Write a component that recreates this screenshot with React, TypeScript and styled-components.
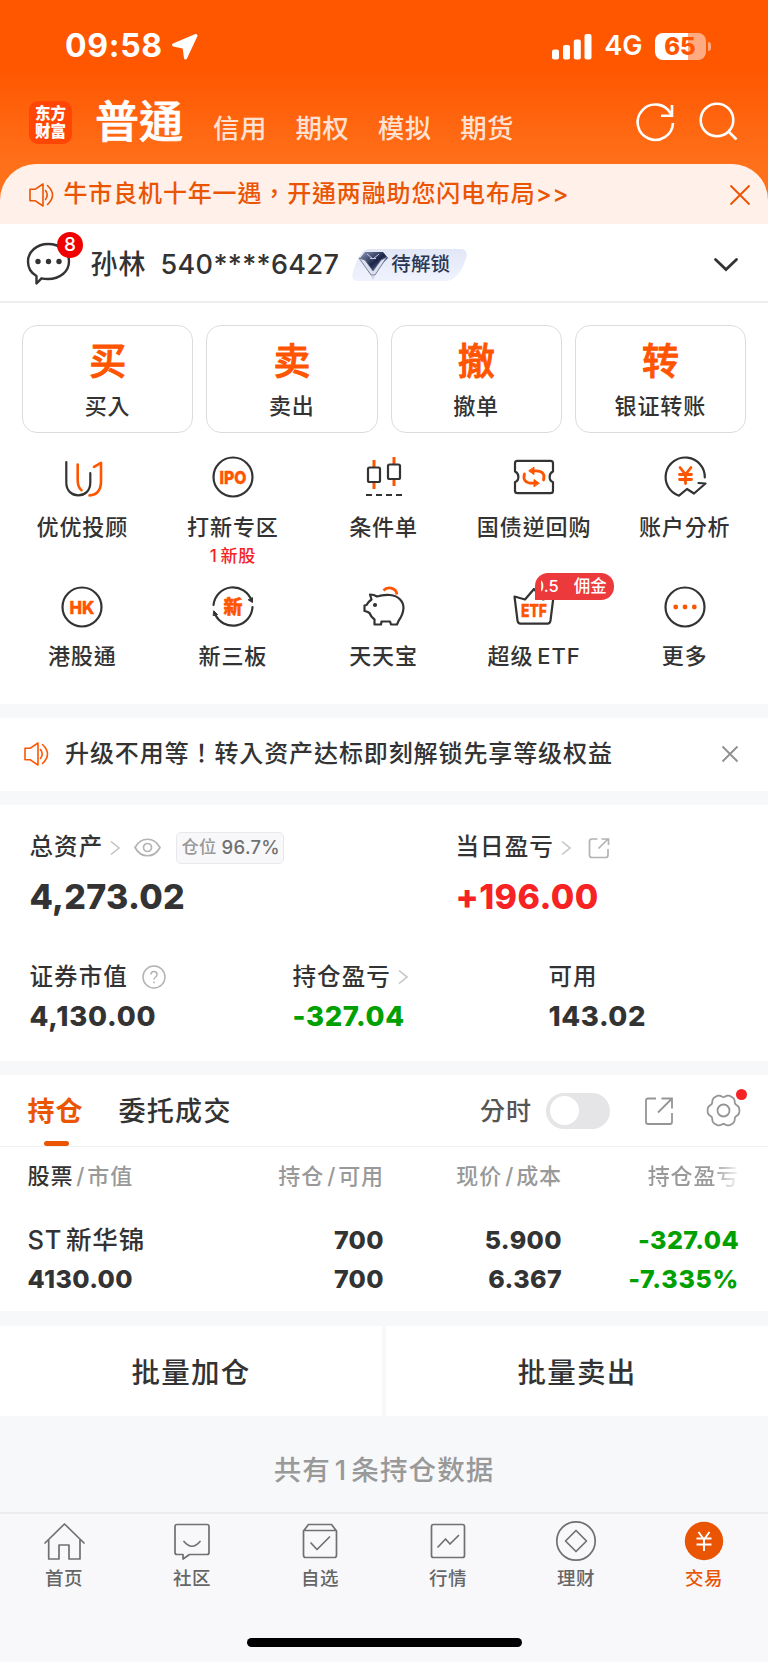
import React from "react";
import styled, { createGlobalStyle } from "styled-components";

const INK = "#333333";
const ORANGE = "#ff5500";
const DEEP = "#ea5504";
const GREEN = "#00a000";
const RED = "#f62223";

const Global = createGlobalStyle`
  * { box-sizing: border-box; }
  body {
    margin: 0;
    background: #f7f8fa;
    color: ${INK};
    font-family: Inter, "Noto Sans CJK TC", "Noto Sans CJK SC", sans-serif;
    font-weight: 500;
  }
  svg { display: block; flex: none; overflow: visible; }
`;

const Page = styled.div`
  width: 768px;
  height: 1662px;
  overflow: hidden;
  display: flex;
  flex-direction: column;
`;

type LabelProps = { $s: number; $p?: number; $c?: string; $w?: number };
/* $s is the font size, $p the extra tracking between glyphs */
const Label = styled.span<LabelProps>`
  font-size: ${(p) => p.$s}px;
  letter-spacing: ${(p) => p.$p ?? 0}px;
  color: ${(p) => p.$c ?? "inherit"};
  font-weight: ${(p) => p.$w ?? 500};
  line-height: 1.2;
  white-space: nowrap;
`;
/* Latin run or digit inside Chinese text, with thin gaps round it */
const Latin = styled.span<{ $l?: number; $r?: number }>`
  margin: 0 ${(p) => p.$r ?? 0}px 0 ${(p) => p.$l ?? 0}px;
`;

/* ---------- header ---------- */
const Top = styled.header`
  background: linear-gradient(#ff5600 0, #ff5600 66px, #ff701a 164px);
  flex: none;
`;
const StatusBar = styled.div`
  height: 92px;
  padding: 1px 62.5px 0 65px;
  display: flex;
  align-items: center;
  color: #fff;
`;
const Spacer = styled.div`
  flex: 1;
`;
const Network = styled(Label)`
  margin-left: 12px;
`;
const Battery = styled.div`
  position: relative;
  margin-left: 12px;
  width: 51px;
  height: 27px;
  border-radius: 8px;
  background: linear-gradient(90deg, #fff 33px, #ffab82 33px);
  color: ${ORANGE};
  font-size: 24px;
  font-weight: 800;
  line-height: 27px;
  text-align: center;
  &::after {
    content: "";
    position: absolute;
    left: 53px;
    top: 9px;
    width: 3px;
    height: 9px;
    border-radius: 0 4px 4px 0;
    background: #ffab82;
  }
`;
const TitleBar = styled.div`
  height: 72px;
  padding: 0 29px;
  display: flex;
  align-items: flex-start;
`;
const Logo = styled.div`
  width: 43px;
  height: 43px;
  margin: 9px 23px 0 0;
  border-radius: 9px;
  background: #ff4605;
  color: #fff;
  font: 900 15.5px/17.5px "Noto Sans CJK SC", sans-serif;
  text-align: center;
  padding-top: 3px;
`;
const TitleTabs = styled.nav`
  display: flex;
  gap: 28.6px;
  color: rgba(255, 255, 255, 0.82);
  padding-top: 21px;
`;
const MainTitle = styled.h1`
  margin: 3.5px 30px 0 0;
  font-size: 44px;
  line-height: 52px;
  font-weight: 500;
  -webkit-text-stroke: 0.7px #fff;
  color: #fff;
`;
const TitleIcons = styled.div`
  margin-left: auto;
  padding-top: 8px;
  display: flex;
`;
const Banner = styled.div`
  height: 60px;
  padding: 1px 18px 0 29px;
  border-radius: 36px 36px 0 0;
  background: #fff0e9;
  color: ${DEEP};
  display: flex;
  align-items: center;
  gap: 9.5px;
`;

/* ---------- account ---------- */
const UserRow = styled.section`
  height: 79px;
  flex: none;
  padding: 5px 30px 0 26px;
  background: #fff;
  border-bottom: 2px solid #eeeeef;
  display: flex;
  align-items: center;
`;
const ChatBox = styled.div`
  position: relative;
  width: 64.5px;
`;
const Count = styled.span`
  position: absolute;
  left: 31px;
  top: -10.5px;
  width: 26px;
  height: 26px;
  border-radius: 13px;
  background: #f00000;
  color: #fff;
  font-size: 19px;
  line-height: 26px;
  text-align: center;
`;
const AccountNo = styled(Label)`
  margin-left: 14px;
`;
const Vip = styled.div`
  position: relative;
  width: 116px;
  height: 32px;
  margin-left: 13px;
  padding-left: 39px;
  display: flex;
  align-items: center;
  svg {
    position: absolute;
    left: 0;
    top: 0;
  }
  span {
    position: relative;
  }
`;

/* ---------- trading actions ---------- */
const Actions = styled.section`
  height: 401px;
  flex: none;
  background: #fff;
  padding-top: 22px;
`;
const Cards = styled.div`
  display: grid;
  grid-template-columns: repeat(4, 1fr);
  gap: 13px;
  padding: 0 22px;
`;
const Card = styled.div`
  height: 108px;
  border: 1.5px solid #dcdcdc;
  border-radius: 15px;
  display: flex;
  flex-direction: column;
  align-items: center;
  padding-top: 14px;
  gap: 9px;
`;
const CardMark = styled(Label)`
  -webkit-text-stroke: 0.9px ${ORANGE};
`;
const Grid = styled.div`
  display: grid;
  grid-template-columns: repeat(5, 1fr);
  padding: 21.3px 8px 0 7px;
`;
const Cell = styled.div`
  position: relative;
  height: 129.3px;
  display: flex;
  flex-direction: column;
  align-items: center;
`;
const CellLabel = styled(Label)`
  margin-top: 13.3px;
`;
const Hint = styled(Label)`
  margin-top: 6.5px;
`;
const Fee = styled.div`
  position: absolute;
  left: 76px;
  top: -10.5px;
  width: 79px;
  height: 27px;
  padding-left: 6px;
  border-radius: 13px 13px 13px 0;
  background: #ec393c;
  color: #fff;
  font-size: 16.5px;
  line-height: 27px;
`;
const FeeClip = styled.div`
  overflow: hidden;
  display: flex;
  justify-content: flex-end;
  gap: 15px;
  width: 66px;
  white-space: nowrap;
`;

/* ---------- notice ---------- */
const Notice = styled.section`
  flex: none;
  height: 72.5px;
  margin: 14px 0;
  padding: 0 30px 0 23.5px;
  background: #fff;
  display: flex;
  align-items: center;
  gap: 16.5px;
`;

/* ---------- assets ---------- */
const Assets = styled.section`
  flex: none;
  height: 256.5px;
  background: #fff;
  padding: 24px 0 0 29.5px;
`;
const AssetRow = styled.div<{ $cols: string; $gap: number }>`
  display: grid;
  grid-template-columns: ${(p) => p.$cols};
  margin-bottom: ${(p) => p.$gap}px;
`;
const Head = styled.div`
  display: flex;
  align-items: center;
  height: 38px;
`;
const Ratio = styled.div`
  height: 32px;
  width: 108px;
  margin-left: 15px;
  padding-left: 2px;
  border: 1.5px solid #e8e8ec;
  border-radius: 5px;
  background: #f8f8fb;
  display: flex;
  align-items: center;
  justify-content: center;
  gap: 5px;
`;
const Figure = styled.div<{ $s: number; $c?: string; $p?: number }>`
  font-size: ${(p) => p.$s}px;
  font-weight: 800;
  letter-spacing: ${(p) => p.$p ?? 0.6}px;
  line-height: 40px;
  color: ${(p) => p.$c ?? INK};
`;
const Total = styled(Figure)`
  line-height: 44px;
  padding-top: 8px;
`;

/* ---------- positions ---------- */
const Positions = styled.section`
  flex: none;
  height: 236px;
  margin-top: 14px;
  background: #fff;
`;
const TabBar = styled.div`
  height: 72px;
  border-bottom: 1.5px solid #f0f1f3;
  padding: 0 28px 0 27.5px;
  display: flex;
  align-items: center;
`;
const ActiveTab = styled.div`
  position: relative;
  margin-right: 35px;
  padding-top: 3px;
  color: ${DEEP};
  &::after {
    content: "";
    position: absolute;
    left: 16px;
    bottom: -17.5px;
    width: 25px;
    height: 5px;
    border-radius: 2.5px;
    background: ${DEEP};
  }
`;
const PlainTab = styled(Label)`
  padding-top: 3px;
`;
const Toggle = styled.div`
  width: 64px;
  height: 36px;
  margin: 0 35px 0 14px;
  padding: 3.5px;
  border-radius: 18px;
  background: #e5e5e8;
  &::before {
    content: "";
    display: block;
    width: 29px;
    height: 29px;
    border-radius: 50%;
    background: #fff;
  }
`;
const GearBox = styled.div`
  position: relative;
  margin-left: 34px;
  &::after {
    content: "";
    position: absolute;
    right: -7px;
    top: -5px;
    width: 11px;
    height: 11px;
    border-radius: 50%;
    background: #f62223;
  }
`;
const Table = styled.div`
  display: grid;
  grid-template-columns: 201px 155.5px 178px 177px;
  grid-template-rows: 58px 70px 7px;
  padding-left: 27.5px;
  align-items: center;
`;
const Right = styled.div`
  text-align: right;
  white-space: nowrap;
`;
const FadeRight = styled(Right)`
  background: linear-gradient(90deg, #999 0, #999 150px, rgba(153, 153, 153, 0.1) 176px);
  -webkit-background-clip: text;
  background-clip: text;
  color: transparent;
`;
const Batch = styled.section`
  flex: none;
  margin-top: 14.5px;
  display: grid;
  grid-template-columns: 382px 382px;
  gap: 4px;
`;
const BatchButton = styled.div`
  height: 90.5px;
  background: #fff;
  display: flex;
  align-items: center;
  justify-content: center;
  padding-top: 4px;
`;
const Summary = styled.div`
  flex: none;
  height: 95.5px;
  padding-top: 13px;
  display: flex;
  align-items: center;
  justify-content: center;
`;
const BottomBar = styled.footer`
  flex: 1;
  border-top: 2px solid #ececee;
  background: #f8f8fb;
`;
const BottomTabs = styled.nav`
  display: grid;
  grid-template-columns: repeat(6, 1fr);
  padding-top: 6px;
`;
const BottomTab = styled.div`
  display: flex;
  flex-direction: column;
  align-items: center;
  gap: 5px;
`;
const HomeBar = styled.div`
  width: 275px;
  height: 9px;
  margin: 49px auto 0;
  border-radius: 5px;
  background: #000;
`;

/* ---------- icons ---------- */
const Speaker = ({ c }: { c: string }) => (
  <svg width="25" height="26" viewBox="0 0 25 26" fill="none" stroke={c} strokeWidth="1.6" strokeLinejoin="round" strokeLinecap="round">
    <path d="M1 7.3H6L14 2V24L6 18.7H1Z M16.5 8.5Q20 13 16.5 17.5 M18.5 3.5Q28.5 13 18.5 22.5" />
  </svg>
);
const Cross = ({ size, c, w }: { size: number; c: string; w: number }) => (
  <svg width={size} height={size} viewBox={`0 0 ${size} ${size}`} stroke={c} strokeWidth={w}>
    <path d={`M.5 .5L${size - 0.5} ${size - 0.5}M${size - 0.5} .5L.5 ${size - 0.5}`} />
  </svg>
);
const ArrowSvg = styled.svg<{ $m: string }>`
  margin: ${(p) => p.$m};
`;
const Arrow = ({ m }: { m: string }) => (
  <ArrowSvg $m={m} width="10" height="16" viewBox="0 0 10 16" fill="none" stroke="#c4c4c4" strokeWidth="1.6">
    <path d="M1 1.5L9 8L1 14.5" />
  </ArrowSvg>
);
const LocationSvg = styled.svg`
  margin-left: 8px;
`;
const HelpSvg = styled.svg`
  margin-left: 14px;
`;
const Fn = ({ children }: { children: React.ReactNode }) => (
  <svg width="46" height="46" viewBox="-23 -23 46 46" fill="none" stroke={INK} strokeWidth="2.2" strokeLinecap="round" strokeLinejoin="round">
    {children}
  </svg>
);
const Word = ({ t, y = 6.6, len, s = 18 }: { t: string; y?: number; len: number; s?: number }) => (
  <text x={-len / 2} y={y} textLength={len} lengthAdjust="spacingAndGlyphs" fontSize={s} fontWeight="800" fill={ORANGE} stroke={ORANGE} strokeWidth="0.4">
    {t}
  </text>
);

/* six soft teeth, one at every 60 degrees */
const gearOutline =
  "M" +
  Array.from({ length: 72 }, (_, i) => {
    const a = (i * Math.PI) / 36;
    const r = 15 + 1.2 * Math.cos(6 * a) - 0.35 * Math.cos(12 * a);
    return `${(r * Math.cos(a)).toFixed(2)} ${(r * Math.sin(a)).toFixed(2)}`;
  }).join("L") +
  "Z";

const functions: { name: string; latin?: string; icon: React.ReactNode; hint?: boolean; fee?: boolean }[] = [
  {
    name: "优优投顾",
    icon: (
      <>
        <path d="M-15.7-15V5.5C-15.7 14-10 18.3-3.7 18.3S8.3 14 8.3 5.5V-4" />
        <g stroke={ORANGE} strokeWidth="2.6">
          <path d="M-4.3-12.5V3C-4.3 8-3.3 11-.5 13.2" />
          <path d="M12-10.2L19-14.2V4C19 13 15 18 7.5 18.4" />
        </g>
      </>
    ),
  },
  {
    name: "打新专区",
    hint: true,
    icon: (
      <>
        <circle r="19.5" />
        <Word t="IPO" len={27} />
      </>
    ),
  },
  {
    name: "条件单",
    icon: (
      <>
        <path stroke={ORANGE} strokeWidth="3" strokeLinecap="butt" d="M-9-17V-10M-9 5V12M11-20V-12M11 2V9" />
        <rect x="-15" y="-9.5" width="12" height="14.5" rx="1.5" />
        <rect x="5" y="-12.5" width="12" height="14.5" rx="1.5" />
        <path strokeLinecap="butt" d="M-17 18H-11M-7 18H-1M3 18H9M13 18H19" />
      </>
    ),
  },
  {
    name: "国债逆回购",
    icon: (
      <>
        <path d="M-16.5-16.2H16.5Q19-16.2 19-13.7V-5.5C14.5-3.5 14.5 3.5 19 5V13.7Q19 16.2 16.5 16.2H-16.5Q-19 16.2-19 13.7V5C-14.5 3.5-14.5-3.5-19-5.5V-13.7Q-19-16.2-16.5-16.2Z" />
        <g stroke={ORANGE} strokeWidth="2.8">
          <path d="M-9.5-3C-11.5 3-8 6.2-2 6.2H0M9.5 3C11.5-3 8-6.2 2-6.2H0" />
          <path fill={ORANGE} strokeWidth="1" d="M0-9.5V-2.5L-5-6ZM0 9.5V2.5L5 6Z" />
        </g>
      </>
    ),
  },
  {
    name: "账户分析",
    icon: (
      <>
        <path d="M19.8 .5A19.6 19.6 0 1 0-6 18.7L2 12L9 16.5L20.5 6.5L13.5 6" />
        <path stroke={ORANGE} strokeWidth="2.8" d="M-5-9.5L.5-2.5L6-9.5M.5-2.5V6.5M-5.5-2.5H6.5M-5.5 2.5H6.5" />
      </>
    ),
  },
  {
    name: "港股通",
    icon: (
      <>
        <circle r="19.5" />
        <Word t="HK" len={25} />
      </>
    ),
  },
  {
    name: "新三板",
    icon: (
      <>
        <path d="M-19.5-2A19.6 19.6 0 0 1 18.5-6.5M19.5 0A19.6 19.6 0 0 1-18 7" />
        <path fill={INK} strokeWidth="1" d="M19.5-9V-4.5L15.5-7ZM-19 4L-15.5 7.5L-19.5 8.5Z" />
        <Word t="新" len={19} s={19} y={7} />
      </>
    ),
  },
  {
    name: "天天宝",
    icon: (
      <>
        <path d="M-13-12.5Q-9-12.5-6-10.5Q0-12.5 7-12C16-11 20.5-5.5 20.5 1Q20 8 15.5 14L14 17.5H8L7 14.5H-1.5L-2 17.5H-8.5V12.5Q-12 10-13.5 6Q-15.5 4.5-18.5 4V-1.5L-16.5-2Q-15-5-11.5-7.5Z" />
        <path stroke={ORANGE} strokeWidth="2.8" strokeLinecap="butt" d="M.5-16.5C4-20.5 13-20 14-12.5" />
        <circle cx="-8" cy="-2" r="2.1" fill={INK} stroke="none" />
      </>
    ),
  },
  {
    name: "超级",
    latin: "ETF",
    fee: true,
    icon: (
      <>
        <path d="M-19.5-10.5L-9-7.5L0-18L9-7.5L19.5-10.5L16.5 13.5Q16 16.6 13.5 16.6H-13.5Q-16 16.6-16.5 13.5Z" />
        <Word t="ETF" len={26} y={10.3} />
      </>
    ),
  },
  {
    name: "更多",
    icon: (
      <>
        <circle r="19.5" />
        <g fill={ORANGE} stroke="none">
          <circle cx="-9.3" r="2.4" />
          <circle r="2.4" />
          <circle cx="9.3" r="2.4" />
        </g>
      </>
    ),
  },
];

const tabs: { name: string; icon: React.ReactNode; on?: boolean }[] = [
  { name: "首页", icon: <path d="M-19 2L.5-17L20 2M-15.3-1.5V18H-5V4H5V18H16V-1.5" /> },
  { name: "社区", icon: <path d="M-15-16.5H15Q17-16.5 17-14.5V11.5Q17 13.5 15 13.5H-2.5L-9 18V13.5H-15Q-17 13.5-17 11.5V-14.5Q-17-16.5-15-16.5ZM-8 .5Q0 10 8 .5" /> },
  { name: "自选", icon: <path d="M-11.5-16.5H11.5L16.5-10V14Q16.5 16.5 14.5 16.5H-14.5Q-16.5 16.5-16.5 14V-10ZM-16-10.5H16M-9 2L-3 8.5L9.5-4" /> },
  { name: "行情", icon: <path d="M-14.5-16.5H14.5Q16.5-16.5 16.5-14.5V14.5Q16.5 16.5 14.5 16.5H-14.5Q-16.5 16.5-16.5 14.5V-14.5Q-16.5-16.5-14.5-16.5ZM-10 6L-2.5-2L2 3L10.5-5.5" /> },
  { name: "理财", icon: <><circle r="19.2" /><path d="M0-10.5L10.5 0L0 10.5L-10.5 0Z" /></> },
  {
    name: "交易",
    on: true,
    icon: (
      <>
        <circle r="19.2" fill={DEEP} stroke="none" />
        <path stroke="#fff" strokeWidth="2" strokeLinecap="butt" d="M-5.5-9L0-1.5L5.5-9M0-1.5V10M-7.5-2.5H7.5M-7.5 3.5H7.5" />
      </>
    ),
  },
];

const cards = [
  ["买", "买入"],
  ["卖", "卖出"],
  ["撤", "撤单"],
  ["转", "银证转账"],
];

const Slash = () => <Latin $l={3} $r={2}>/</Latin>;
const Pair = ({ a, b }: { a: string; b: string }) => (
  <Right>
    <Label $s={22} $p={0.9} $c="#999">{a}<Slash />{b}</Label>
  </Right>
);
const Num = ({ v, c, p = 0.4 }: { v: string; c?: string; p?: number }) => (
  <Right><Label $s={25} $w={800} $p={p} $c={c}>{v}</Label></Right>
);

export default function App() {
  return (
    <Page>
      <Global />
      <Top>
        <StatusBar>
          <Label $s={32} $w={700} $p={0.7}>09:58</Label>
          <LocationSvg width="28" height="28" viewBox="0 0 28 28">
            <path d="M25 2.5L2.5 12L13 14.2L14.5 25Z" fill="#fff" stroke="#fff" strokeWidth="3" strokeLinejoin="round" />
          </LocationSvg>
          <Spacer />
          <svg width="40" height="26" viewBox="0 0 40 26" fill="#fff">
            <rect y="15.5" width="7" height="10" rx="2" />
            <rect x="11" y="11" width="7" height="14.5" rx="2" />
            <rect x="21.8" y="5.5" width="7" height="20" rx="2" />
            <rect x="32.5" y="0" width="7" height="25.5" rx="2" />
          </svg>
          <Network $s={27} $w={600}>4G</Network>
          <Battery>65</Battery>
        </StatusBar>
        <TitleBar>
          <Logo>东方<br />财富</Logo>
          <MainTitle>普通</MainTitle>
          <TitleTabs>
            {["信用", "期权", "模拟", "期货"].map((t) => (
              <Label key={t} $s={26.5} $p={0.4}>{t}</Label>
            ))}
          </TitleTabs>
          <TitleIcons>
            <svg width="105" height="44" viewBox="0 0 105 44" fill="none" stroke="#fff" strokeWidth="2.6">
              <path d="M37 14A17.7 17.7 0 1 0 39 23M38 5V15.7H27" />
              <circle cx="83" cy="20" r="16.3" />
              <path d="M94 31L102.5 39.5" />
            </svg>
          </TitleIcons>
        </TitleBar>
        <Banner>
          <Speaker c={DEEP} />
          <Label $s={24} $p={0.85}>牛市良机十年一遇，开通两融助您闪电布局&gt;&gt;</Label>
          <Spacer />
          <Cross size={20} c={DEEP} w={1.9} />
        </Banner>
      </Top>

      <UserRow>
        <ChatBox>
          <svg width="46" height="46" viewBox="0 0 46 46" fill="none" stroke={INK} strokeWidth="2.4" strokeLinejoin="round">
            <path d="M22 2C34 2 43 9.5 43 19.5S34 37 22 37Q18 37 15.5 36.3L10.5 41.5V34C5 31 2 26 2 19.5C2 9.5 11 2 22 2Z" />
            <g fill={INK} stroke="none">
              <circle cx="12" cy="19.5" r="2.7" />
              <circle cx="22.5" cy="19.5" r="2.7" />
              <circle cx="33" cy="19.5" r="2.7" />
            </g>
          </svg>
          <Count>8</Count>
        </ChatBox>
        <Label $s={27} $p={1}>孙林</Label>
        <AccountNo $s={27} $p={0.35}>540****6427</AccountNo>
        <Vip>
          <svg width="116" height="32" viewBox="0 0 116 32">
            <defs>
              <linearGradient id="pill" x1="0" y1="0" x2="0" y2="1">
                <stop offset="0" stopColor="#e2e7f6" />
                <stop offset="1" stopColor="#f0f3fe" />
              </linearGradient>
              <linearGradient id="gem" x1="0" y1="0" x2="1" y2="1">
                <stop offset="0" stopColor="#8f9ac0" />
                <stop offset=".5" stopColor="#1b2547" />
                <stop offset="1" stopColor="#8c98bb" />
              </linearGradient>
            </defs>
            <path d="M17 0H108Q116 0 114.5 8Q107 32 93 32H6Q-1 32 .5 25Q7 0 17 0Z" fill="url(#pill)" />
            <path d="M13 3H31L36 9L21 24L8 9Z" fill="url(#gem)" />
            <path d="M7 9L13 11L21 22L29 11L35 8L23 26H19Z" fill="#dcdfec" stroke="#59648a" strokeWidth=".8" />
            <path d="M19 27H23L21 31Z" fill="#cfd4e6" />
            <path d="M15 5L21 10L27 5M18 9.5L24 9.5" stroke="#c3cae2" fill="none" />
          </svg>
          <Label $s={19.5} $p={0.2} $c="#2b3654">待解锁</Label>
        </Vip>
        <Spacer />
        <svg width="24" height="14" viewBox="0 0 24 14" fill="none" stroke={INK} strokeWidth="2.8" strokeLinecap="round">
          <path d="M1.5 1.5L12 11.5L22.5 1.5" />
        </svg>
      </UserRow>

      <Actions>
        <Cards>
          {cards.map(([big, small]) => (
            <Card key={big}>
              <CardMark $s={37} $c={ORANGE}>{big}</CardMark>
              <Label $s={22} $p={0.9}>{small}</Label>
            </Card>
          ))}
        </Cards>
        <Grid>
          {functions.map((f) => (
            <Cell key={f.name}>
              <Fn>{f.icon}</Fn>
              <CellLabel $s={22} $p={0.9}>{f.name}{f.latin && <Latin $l={4}>{f.latin}</Latin>}</CellLabel>
              {f.hint && <Hint $s={17} $p={0.8} $c={RED}><Latin $r={3}>1</Latin>新股</Hint>}
              {f.fee && (
                <Fee>
                  <FeeClip><span>0.5</span><span>佣金</span></FeeClip>
                </Fee>
              )}
            </Cell>
          ))}
        </Grid>
      </Actions>

      <Notice>
        <Speaker c={ORANGE} />
        <Label $s={24} $p={0.9}>升级不用等！转入资产达标即刻解锁先享等级权益</Label>
        <Spacer />
        <Cross size={16} c="#8f8f8f" w={1.8} />
      </Notice>

      <Assets>
        <AssetRow $cols="426px 1fr" $gap={39.5}>
          <div>
            <Head>
              <Label $s={23.5} $p={1.1}>总资产</Label>
              <Arrow m="0 14px 0 6.5px" />
              <svg width="27" height="19" viewBox="0 0 27 19" fill="none" stroke="#b3b3b3" strokeWidth="1.7">
                <path d="M1 9.5C7-1.5 20-1.5 26 9.5C20 20.5 7 20.5 1 9.5Z" />
                <circle cx="13.5" cy="9.5" r="4" />
              </svg>
              <Ratio>
                <Label $s={17.3} $p={0.2} $c="#999">仓位</Label>
                <Label $s={18.5} $p={0.3} $c="#707070">96.7%</Label>
              </Ratio>
            </Head>
            <Total $s={34} $p={0.3}>4,273.02</Total>
          </div>
          <div>
            <Head>
              <Label $s={23.5} $p={1.1}>当日盈亏</Label>
              <Arrow m="0 17px 0 7px" />
              <svg width="22" height="22" viewBox="0 0 22 22" fill="none" stroke="#b3b3b3" strokeWidth="1.7">
                <path d="M9.5 2H4Q1.5 2 1.5 4.5V18Q1.5 20.5 4 20.5H17.5Q20 20.5 20 18V12M10.5 11.5L20 2M13.5 2H20.5V8" />
              </svg>
            </Head>
            <Total $s={34} $c={RED} $p={0.4}>+196.00</Total>
          </div>
        </AssetRow>
        <AssetRow $cols="263px 256px 1fr" $gap={0}>
          <div>
            <Head>
              <Label $s={23.5} $p={1.1}>证券市值</Label>
              <HelpSvg width="24" height="24" viewBox="0 0 24 24" fill="none" stroke="#b3b3b3" strokeWidth="1.5">
                <circle cx="12" cy="12" r="11" />
                <path d="M9 9.5Q9 6.5 12 6.5T15 9.5Q15 11 13.5 12Q12 13 12 14.5M12 16.5V18.3" />
              </HelpSvg>
            </Head>
            <Figure $s={27.5} $p={0.8}>4,130.00</Figure>
          </div>
          <div>
            <Head>
              <Label $s={23.5} $p={1.1}>持仓盈亏</Label>
              <Arrow m="0 0 0 7px" />
            </Head>
            <Figure $s={27.5} $c={GREEN}>-327.04</Figure>
          </div>
          <div>
            <Head>
              <Label $s={23.5} $p={1.1}>可用</Label>
            </Head>
            <Figure $s={27.5}>143.02</Figure>
          </div>
        </AssetRow>
      </Assets>

      <Positions>
        <TabBar>
          <ActiveTab><Label $s={27} $p={1} $w={700}>持仓</Label></ActiveTab>
          <PlainTab $s={27} $p={1.3}>委托成交</PlainTab>
          <Spacer />
          <Label $s={25} $p={1} $c="#555">分时</Label>
          <Toggle />
          <svg width="28" height="28" viewBox="0 0 28 28" fill="none" stroke="#959595" strokeWidth="1.8">
            <path d="M11 1.5H3Q1 1.5 1 3.5V25Q1 27 3 27H25Q27 27 27 25V16M13 15.5L27 1.5M16.5 1.5H27V11.5" />
          </svg>
          <GearBox>
            <svg width="33" height="33" viewBox="-16.5 -16.5 33 33" fill="none" stroke="#959595" strokeWidth="1.8" strokeLinejoin="round">
              <path d={gearOutline} />
              <circle r="6" />
            </svg>
          </GearBox>
        </TabBar>
        <Table>
          <div>
            <Label $s={22} $p={0.9}>股票</Label>
            <Label $s={22} $p={0.9} $c="#999"><Slash />市值</Label>
          </div>
          <Pair a="持仓" b="可用" />
          <Pair a="现价" b="成本" />
          <FadeRight><Label $s={22} $p={0.8}>持仓盈亏</Label></FadeRight>
          <Label $s={25.5} $p={0.9}>ST<Latin $l={3.5}>新华锦</Latin></Label>
          <Num v="700" />
          <Num v="5.900" />
          <Num v="-327.04" c={GREEN} />
          <Label $s={25} $w={800} $p={0.4}>4130.00</Label>
          <Num v="700" />
          <Num v="6.367" />
          <Num v="-7.335%" c={GREEN} p={0.7} />
        </Table>
      </Positions>

      <Batch>
        <BatchButton><Label $s={28.5} $p={1.2}>批量加仓</Label></BatchButton>
        <BatchButton><Label $s={28.5} $p={1.2}>批量卖出</Label></BatchButton>
      </Batch>
      <Summary><Label $s={27.5} $p={1.1} $c="#999">共有<Latin $l={4} $r={4}>1</Latin>条持仓数据</Label></Summary>

      <BottomBar>
        <BottomTabs>
          {tabs.map((t) => (
            <BottomTab key={t.name}>
              <svg width="42" height="42" viewBox="-21 -21 42 42" fill="none" stroke="#707070" strokeWidth="1.7" strokeLinejoin="round" strokeLinecap="round">
                {t.icon}
              </svg>
              <Label $s={18.5} $p={0.6} $c={t.on ? DEEP : "#666"}>{t.name}</Label>
            </BottomTab>
          ))}
        </BottomTabs>
        <HomeBar />
      </BottomBar>
    </Page>
  );
}
